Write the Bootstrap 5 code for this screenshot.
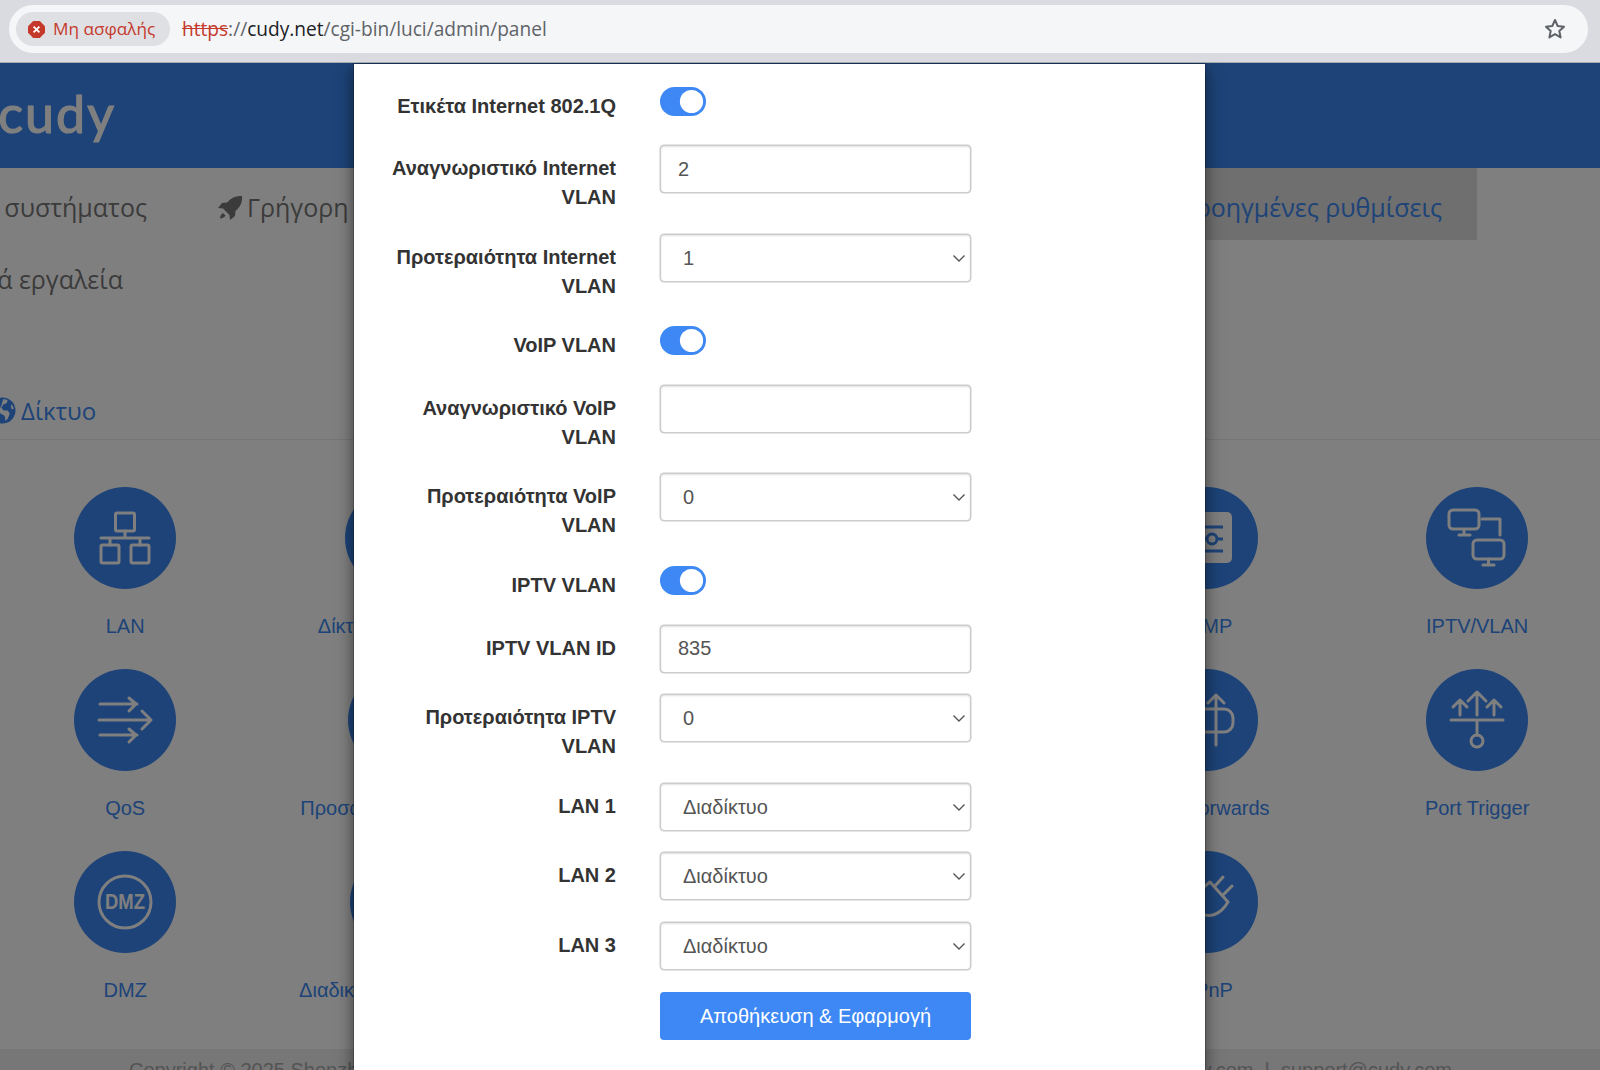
<!DOCTYPE html>
<html lang="el">
<head>
    <meta charset="UTF-8">
    <meta name="viewport" content="width=device-width, initial-scale=1.0">
    <title>Cudy - IPTV/VLAN</title>
    <link href="https://cdn.jsdelivr.net/npm/bootstrap@5.3.0/dist/css/bootstrap.min.css" rel="stylesheet">
    <style>
        html, body {
            height: 1070px;
            overflow: hidden;
        }
        body {
            font-family: "Liberation Sans", Arial, sans-serif;
            font-size: 20px;
            background: #fff;
            color: #777;
        }

        /* browser bar */
        .chrome-bar {
            height: 63px;
            padding: 5px 12px 0 9px;
            background: #dadbe0;
            border-bottom: 1px solid #a9aaad;
        }
        .url-pill {
            height: 48px;
            padding: 0 22px 0 7px;
            background: #f5f6f8;
            border-radius: 24px;
            font-family: "Open Sans", sans-serif;
            font-size: 19.1px;
            color: #5f6368;
        }
        .sec-chip {
            height: 34px;
            width: 154px;
            padding-left: 12px;
            margin-right: 12px;
            background: #dfe0e4;
            border-radius: 17px;
            color: #c5392b;
            font-size: 17.2px;
            gap: 8px;
        }
        .url-scheme {
            color: #c5392b;
            text-decoration: line-through;
        }
        .url-host {
            color: #202124;
        }

        /* page behind the dialog */
        .browser-view {
            height: 1007px;
            overflow: hidden;
        }
        .cudy-header {
            height: 105px;
            background: #3b87f1;
        }
        .logo-box {
            width: 116px;
            height: 105px;
            justify-content: flex-end;
            padding-bottom: 5px;
            font-family: Lato, sans-serif;
            font-size: 52px;
            letter-spacing: 2px;
            color: #fff;
            white-space: nowrap;
            -webkit-text-stroke: 1.2px #fff;
        }
        .tab-row {
            height: 71.5px;
            width: 1477px;
            font-family: "Open Sans", sans-serif;
            font-size: 25px;
            color: #777;
            white-space: nowrap;
        }
        .tab-first {
            justify-content: flex-end;
            padding-right: 35px;
            padding-top: 8px;
        }
        .tab-quick {
            padding-top: 8px;
        }
        .tab-active {
            width: 360px;
            height: 72px;
            padding: 8px 35px 0 0;
            background: #dedede;
            color: #3b87f1;
            justify-content: flex-end;
        }
        .section-title {
            height: 129px;
            padding-bottom: 10px;
            font-family: "Open Sans", sans-serif;
            font-size: 24px;
            color: #3b87f1;
            border-bottom: 1px solid #ececec;
            gap: 5px;
        }
        .section-title svg {
            margin-bottom: 5px;
        }
        .tile-grid {
            display: grid;
            grid-template-columns: repeat(6, 270.4px);
            grid-auto-rows: 182px;
            margin: 47px 0 16px -10px;
            text-align: center;
            color: #3b87f1;
        }
        .tile-disc {
            display: block;
            width: 102px;
            height: 102px;
            margin: 0 auto 23px;
            border-radius: 50%;
            background: #3b87f1;
        }
        .tile-disc svg {
            display: block;
        }
        .tile-name {
            line-height: 28px;
            white-space: nowrap;
        }
        .tile-shift-a {
            transform: translateX(3px);
        }
        .tile-shift-b {
            transform: translateX(5px);
        }
        .ico {
            fill: none;
            stroke: #fff;
            stroke-width: 3;
            stroke-linecap: round;
            stroke-linejoin: round;
        }
        .cudy-footer {
            height: 40px;
            padding: 6px 148px 0 129px;
            background: #eeeeee;
            color: #a8a8a8;
            white-space: nowrap;
        }

        /* dialog */
        .modal-backdrop.show {
            position: absolute;
            width: 100%;
            height: 100%;
            top: 63px;
        }
        .modal.vlan-modal {
            position: absolute;
            top: 63px;
            height: 1007px;
            overflow: hidden;
        }
        .vlan-modal .modal-dialog {
            max-width: 853px;
            margin: 0 0 0 353px;
        }
        .vlan-modal .modal-content {
            height: 1100px;
            border-radius: 0;
            box-shadow: 0 5px 15px rgba(0, 0, 0, .5);
            padding: 18.5px 0 0 26px;
        }
        .form-line {
            display: flex;
            gap: 44px;
            margin-bottom: 21.6px;
        }
        .form-line.switch-line {
            height: 41px;
        }
        .field-label {
            width: 236px;
            margin: 0;
            padding-top: 9px;
            line-height: 29px;
            font-weight: 700;
            text-align: right;
            color: #333;
        }
        .field-box {
            width: 311px;
        }
        .field-box .form-control,
        .field-box .form-select {
            height: 48px;
            font-size: 20px;
            color: #555;
            border-color: #ccc;
            border-radius: 4px;
            box-shadow: inset 0 1px 2px rgba(0, 0, 0, .12), 0 0 0 .5px #ccc;
        }
        .field-box .form-control {
            padding-left: 17px;
        }
        .field-box .form-select {
            padding-left: 22px;
            background-image: url("data:image/svg+xml,%3csvg xmlns='http://www.w3.org/2000/svg' viewBox='0 0 14 14'%3e%3cpath fill='none' stroke='%23555' stroke-width='1.4' d='M1.5 4.5 7 10l5.5-5.5'/%3e%3c/svg%3e");
            background-position: right 4px center;
            background-size: 14px 14px;
        }
        .field-box .form-switch {
            padding: 4px 0 0;
            margin: 0;
            min-height: 0;
        }
        .field-box .form-switch .form-check-input {
            display: block;
            float: none;
            width: 46px;
            height: 29px;
            margin: 0;
            border: 0;
            background-color: #3d88f5;
            background-position: right center;
            background-image: url("data:image/svg+xml,%3csvg xmlns='http://www.w3.org/2000/svg' viewBox='-4 -4 8 8'%3e%3ccircle r='3.2' fill='%23fff'/%3e%3c/svg%3e");
        }
        .save-btn {
            width: 311px;
            height: 48px;
            padding: 0;
            font-size: 20px;
            background: #3d88f5;
            border: 0;
            border-radius: 4px;
        }
    </style>
</head>
<body>
    <div class="chrome-bar">
        <div class="url-pill d-flex align-items-center">
            <span class="sec-chip d-flex align-items-center">
                <svg width="17" height="17" viewBox="0 0 17 17"><path fill="#c5392b" d="M5.2 0h6.6L17 5.2v6.6L11.8 17H5.2L0 11.8V5.2z"/><path stroke="#fff" stroke-width="1.8" d="M5.6 5.6l5.8 5.8M11.4 5.6l-5.8 5.8"/></svg>
                Μη ασφαλής
            </span>
            <span><span class="url-scheme">https</span>://<span class="url-host">cudy.net</span>/cgi-bin/luci/admin/panel</span>
            <svg class="ms-auto" width="22" height="22" viewBox="0 0 22 22"><path fill="none" stroke="#5f6368" stroke-width="2" stroke-linejoin="round" d="M11 2l2.7 6 6.3.7-4.7 4.3 1.3 6.4L11 16.1l-5.6 3.3 1.3-6.4L2 8.7 8.3 8z"/></svg>
        </div>
    </div>

    <div class="browser-view position-relative">
        <div class="cudy-header">
            <div class="logo-box d-flex align-items-center">cudy</div>
        </div>

        <div class="tab-row d-flex align-items-center">
            <div class="tab-first d-flex" style="width:182px">Κατάσταση συστήματος</div>
            <div class="tab-quick d-flex align-items-center ps-5" style="margin-left:-13px">
                <svg width="26" height="26" viewBox="0 0 26 26" class="me-1"><path fill="#777" d="M25 1c-6-.6-11 1.500-15 6.500L5 8 1 13l5 .5L12.500 20l.5 5 5-4 .5-5C23.500 12 25.600 7 25 1zM6 18c-2 1-3 3.500-3 5.500 2 0 4.500-1 5.500-3z"/></svg>
                Γρήγορη ρύθμιση
            </div>
            <div class="tab-active d-flex align-items-center ms-auto">Προηγμένες ρυθμίσεις</div>
        </div>
        <div class="tab-row d-flex align-items-center">
            <div class="tab-first d-flex" style="width:158px">Διαχειριστικά εργαλεία</div>
        </div>

        <div class="section-title d-flex align-items-end">
            <svg class="flex-shrink-0" style="margin-left:-11px" width="27" height="27" viewBox="0 0 26 26"><circle cx="13" cy="13" r="12.500" fill="#3b87f1"/><path fill="#fff" d="M14 2l4 1-1 3-3 1-2 3 2 3 4 0 2 3-2 5-2 2-1-5-4-2-1-4 2-4 1-4zM22 7l2 4-2 1-1-3z"/></svg>
            <span>Δίκτυο</span>
        </div>

        <div class="tile-grid">
            <div>
                <span class="tile-disc"><svg viewBox="-51 -51 102 102"><g class="ico"><rect x="-9.500" y="-25" width="19" height="18" rx="1.500"/><path d="M0-7V0M-24 0h48M-15 0v7M15 0v7"/><rect x="-24" y="7" width="18" height="18" rx="1.500"/><rect x="6" y="7" width="18" height="18" rx="1.500"/></g></svg></span>
                <div class="tile-name">LAN</div>
            </div>
            <div>
                <span class="tile-disc"></span>
                <div class="tile-name">Δίκτυο Internet IP</div>
            </div>
            <div></div>
            <div></div>
            <div>
                <span class="tile-disc"><svg viewBox="-51 -51 102 102"><rect x="-25" y="-26" width="50" height="51" rx="5" fill="#fff"/><g fill="none" stroke="#3b87f1" stroke-width="3"><path d="M-16-11h32M-16 13h32M-16 1h16M10 1h6"/><circle cx="5" cy="1" r="5"/></g></svg></span>
                <div class="tile-name">IGMP</div>
            </div>
            <div>
                <span class="tile-disc"><svg viewBox="-51 -51 102 102"><g class="ico"><rect x="-28" y="-28" width="30" height="19" rx="4"/><path d="M-13-9v6M-18-3h11"/><path d="M5-19h18v16"/><rect x="-4" y="2" width="31" height="19" rx="4"/><path d="M11.500 21v6M6 27h11"/></g></svg></span>
                <div class="tile-name">IPTV/VLAN</div>
            </div>

            <div>
                <span class="tile-disc"><svg viewBox="-51 -51 102 102"><g class="ico"><path d="M-25-16h37M4-22l7 6-7 7M-26 0h52M17-9l9 9-9 9M-25 15h37M4 9l7 6-7 7"/></g></svg></span>
                <div class="tile-name">QoS</div>
            </div>
            <div class="tile-shift-a">
                <span class="tile-disc"></span>
                <div class="tile-name">Προσαρμοσμένο DNS</div>
            </div>
            <div></div>
            <div></div>
            <div>
                <span class="tile-disc"><svg viewBox="-51 -51 102 102"><g class="ico"><path d="M-22-11H17a9 9 0 0 1 9 9v5a9 9 0 0 1-9 9H-22M9 25V-25M1-17l8-8 8 8"/></g></svg></span>
                <div class="tile-name">Port Forwards</div>
            </div>
            <div>
                <span class="tile-disc"><svg viewBox="-51 -51 102 102"><g class="ico"><path d="M-26 0h52M0-5v-23M-9-19l9-9 9 9M-17-5v-15M-24-13l7-7 7 7M17-5v-15M10-13l7-7 7 7M0 0v15"/><circle cx="0" cy="21" r="6"/></g></svg></span>
                <div class="tile-name">Port Trigger</div>
            </div>

            <div>
                <span class="tile-disc"><svg viewBox="-51 -51 102 102"><circle r="26" fill="none" stroke="#fff" stroke-width="3"/><text x="0" y="6.500" text-anchor="middle" font-family="Liberation Sans" font-weight="700" font-size="22" fill="#fff" textLength="40" lengthAdjust="spacingAndGlyphs">DMZ</text></svg></span>
                <div class="tile-name">DMZ</div>
            </div>
            <div class="tile-shift-b">
                <span class="tile-disc"></span>
                <div class="tile-name">Διαδικτυακή διεύθυνση</div>
            </div>
            <div></div>
            <div></div>
            <div>
                <span class="tile-disc"><svg viewBox="-51 -51 102 102"><g class="ico"><path d="M8-16l8-9M16-7l9-9M3-20 21 0C14 12 3 17-8 11L-14 5-3-15zM-8 11l-8 10"/></g></svg></span>
                <div class="tile-name">UPnP</div>
            </div>
            <div></div>
        </div>

        <div class="cudy-footer d-flex justify-content-between">
            <span>Copyright © 2025 Shenzhen Cudy Technology Co., Ltd.</span>
            <span>www.cudy.com &nbsp;|&nbsp; support@cudy.com</span>
        </div>
    </div>

    <!-- IPTV/VLAN settings dialog -->
    <div class="modal-backdrop show"></div>
    <div class="modal vlan-modal d-block">
        <div class="modal-dialog">
            <div class="modal-content">
                <form>
                    <div class="form-line switch-line">
                        <label class="field-label">Ετικέτα Internet 802.1Q</label>
                        <div class="field-box"><div class="form-check form-switch"><input class="form-check-input" type="checkbox" role="switch" checked></div></div>
                    </div>
                    <div class="form-line">
                        <label class="field-label">Αναγνωριστικό Internet VLAN</label>
                        <div class="field-box"><input class="form-control" type="text" value="2"></div>
                    </div>
                    <div class="form-line">
                        <label class="field-label">Προτεραιότητα Internet VLAN</label>
                        <div class="field-box"><select class="form-select"><option>1</option></select></div>
                    </div>
                    <div class="form-line switch-line">
                        <label class="field-label">VoIP VLAN</label>
                        <div class="field-box"><div class="form-check form-switch"><input class="form-check-input" type="checkbox" role="switch" checked></div></div>
                    </div>
                    <div class="form-line">
                        <label class="field-label">Αναγνωριστικό VoIP VLAN</label>
                        <div class="field-box"><input class="form-control" type="text"></div>
                    </div>
                    <div class="form-line">
                        <label class="field-label">Προτεραιότητα VoIP VLAN</label>
                        <div class="field-box"><select class="form-select"><option>0</option></select></div>
                    </div>
                    <div class="form-line switch-line">
                        <label class="field-label">IPTV VLAN</label>
                        <div class="field-box"><div class="form-check form-switch"><input class="form-check-input" type="checkbox" role="switch" checked></div></div>
                    </div>
                    <div class="form-line">
                        <label class="field-label">IPTV VLAN ID</label>
                        <div class="field-box"><input class="form-control" type="text" value="835"></div>
                    </div>
                    <div class="form-line">
                        <label class="field-label">Προτεραιότητα IPTV VLAN</label>
                        <div class="field-box"><select class="form-select"><option>0</option></select></div>
                    </div>
                    <div class="form-line">
                        <label class="field-label">LAN 1</label>
                        <div class="field-box"><select class="form-select"><option>Διαδίκτυο</option></select></div>
                    </div>
                    <div class="form-line">
                        <label class="field-label">LAN 2</label>
                        <div class="field-box"><select class="form-select"><option>Διαδίκτυο</option></select></div>
                    </div>
                    <div class="form-line">
                        <label class="field-label">LAN 3</label>
                        <div class="field-box"><select class="form-select"><option>Διαδίκτυο</option></select></div>
                    </div>
                    <div class="form-line">
                        <div class="field-label"></div>
                        <div class="field-box"><button type="button" class="btn btn-primary save-btn">Αποθήκευση &amp; Εφαρμογή</button></div>
                    </div>
                </form>
            </div>
        </div>
    </div>

    <script src="https://cdn.jsdelivr.net/npm/bootstrap@5.3.0/dist/js/bootstrap.bundle.min.js"></script>
</body>
</html>
